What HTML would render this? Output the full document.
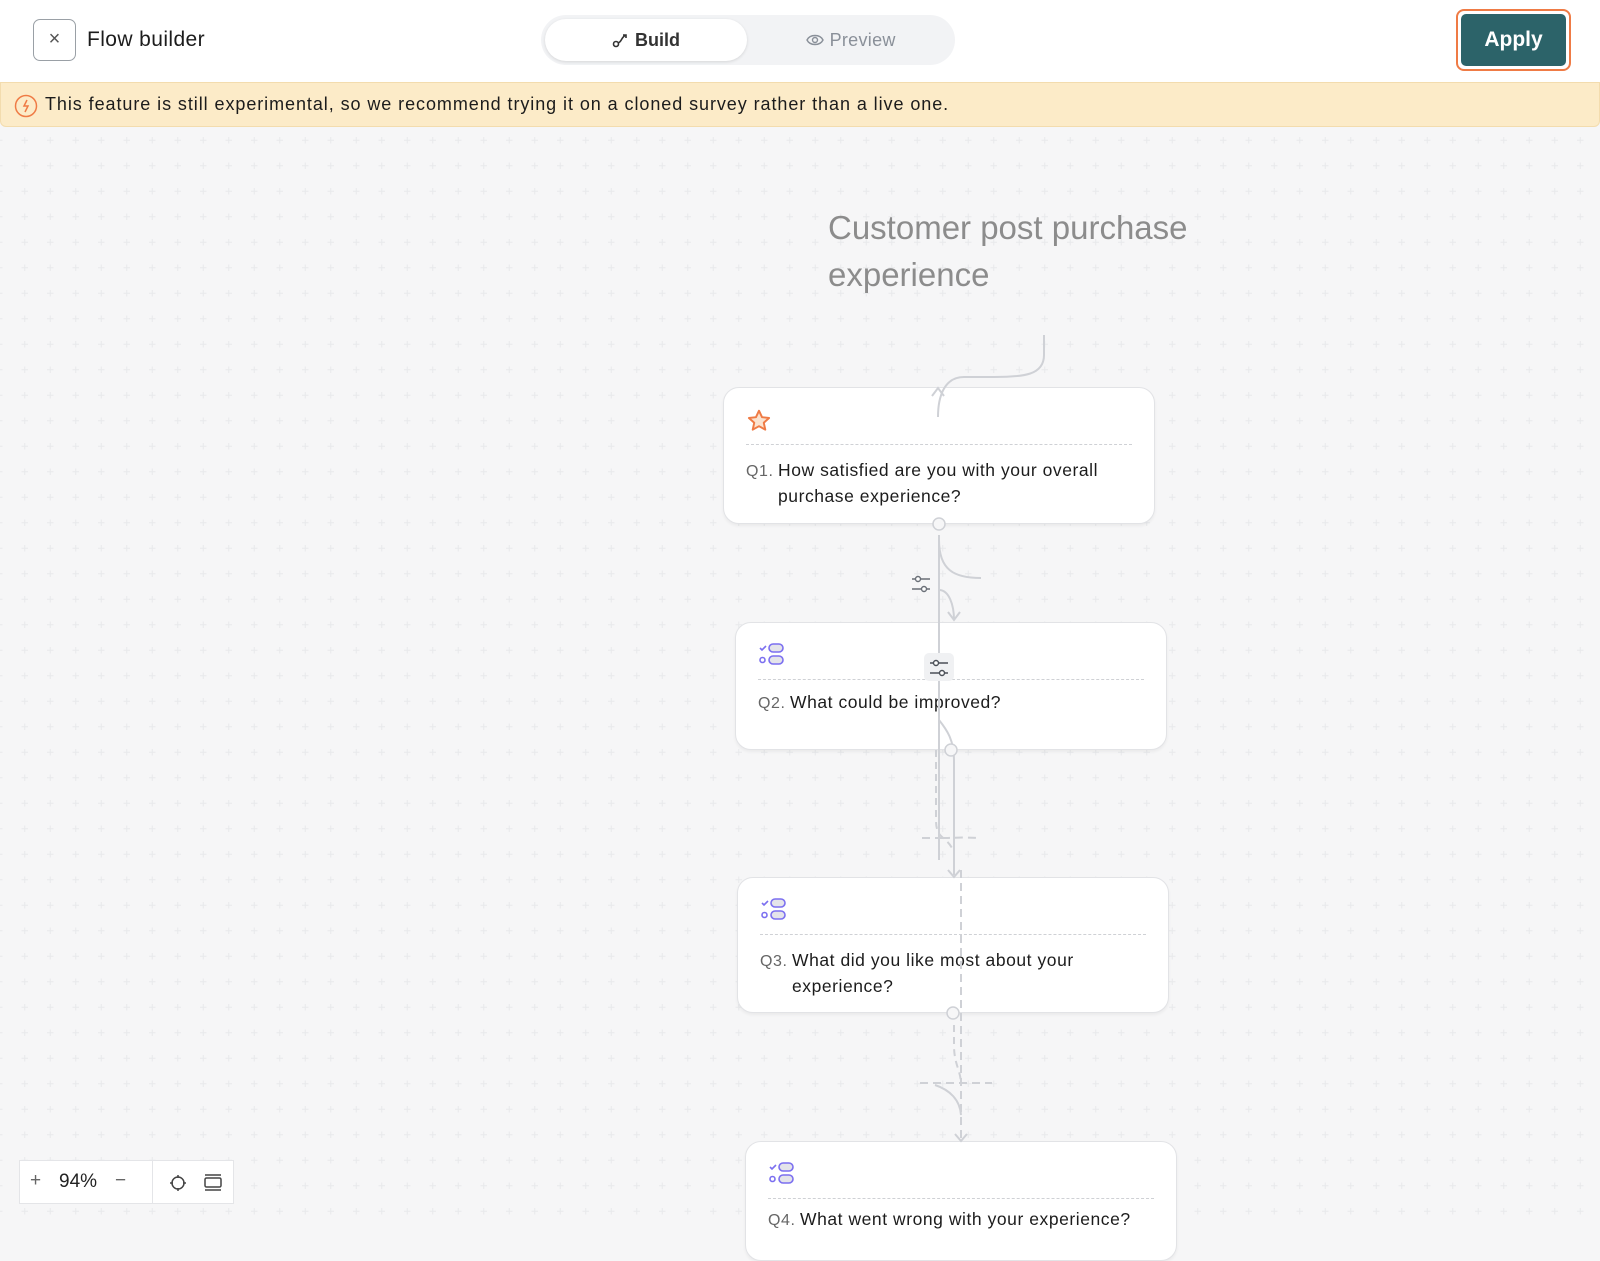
<!DOCTYPE html>
<html><head><meta charset="utf-8"><style>
*{box-sizing:border-box;margin:0;padding:0}
body{width:1600px;height:1224px;overflow:hidden;background:#f6f6f7;font-family:"Liberation Sans",sans-serif;position:relative;color:#1c1c1c}
.hdr{position:absolute;left:0;top:0;width:1600px;height:82px;background:#fff}
.close{position:absolute;left:33px;top:19px;width:43px;height:42px;border:1.5px solid #9aa0a6;border-radius:7px;color:#555;font-size:20px;text-align:center;line-height:38px}
.title{position:absolute;left:87px;top:28px;font-size:21px;color:#1c1c1c;letter-spacing:0.4px}
.tog{position:absolute;left:541px;top:15px;width:414px;height:50px;background:#f2f3f5;border-radius:25px}
.build{position:absolute;left:4px;top:4px;width:202px;height:42px;background:#fff;border-radius:21px;box-shadow:0 1px 3px rgba(0,0,0,.12);text-align:center;line-height:42px;font-size:18px;font-weight:bold;color:#333}
.prev{position:absolute;left:210px;top:4px;width:200px;height:42px;text-align:center;line-height:42px;font-size:18px;color:#8a9099;letter-spacing:0.3px}
.apply{position:absolute;left:1456px;top:9px;width:115px;height:62px;border:2px solid #ef7b45;border-radius:8px;padding:3px}
.apply div{width:100%;height:100%;background:#2c6369;border-radius:5px;color:#fff;font-size:21px;font-weight:bold;text-align:center;line-height:52px}
.ban{position:absolute;left:0;top:82px;width:1600px;height:45px;background:#fcebc8;border:1px solid #f3dcae;border-radius:0 0 6px 6px}
.ban span{position:absolute;left:44px;top:11px;font-size:18px;letter-spacing:0.93px;color:#1c1c1c;white-space:nowrap}
.ban svg{position:absolute;left:13px;top:11px}
.ctitle{position:absolute;left:828px;top:204px;font-size:33px;line-height:47px;color:#8c8c8c}
.card{position:absolute;background:#fff;border:1px solid #e2e3e6;border-radius:16px;box-shadow:0 2px 3px rgba(0,0,0,.05)}
.card .sep{position:absolute;left:22px;right:22px;top:56px;border-top:1px dashed #cfd1d5}
.card .q{position:absolute;left:22px;top:70px;font-size:17.5px;line-height:25.5px;color:#1c1c1c;padding-left:32px;letter-spacing:0.55px;white-space:nowrap}
.card .q b{position:absolute;left:0;top:1px;font-weight:normal;color:#666;font-size:16px}
.card svg{position:absolute;left:22px;top:20px}
.zc{position:absolute;left:19px;top:1160px;width:215px;height:44px;background:#fff;border:1px solid #e4e5e8;font-size:19px;color:#222}
</style></head><body>
<svg width="1600" height="1224" style="position:absolute;left:0;top:0">
<defs><pattern id="g" x="12" y="0" width="25.5" height="25.5" patternUnits="userSpaceOnUse"><path d="M12.75 9.5v6.5M9.5 12.75h6.5" stroke="#e8e9ec" stroke-width="1"/></pattern></defs>
<rect x="0" y="127" width="1600" height="1097" fill="url(#g)"/>
</svg>
<div class="hdr">
<div class="close">×</div>
<div class="title">Flow builder</div>
<div class="tog"><div class="build"><svg width="18" height="16" viewBox="0 0 18 16" style="vertical-align:-2px"><circle cx="4" cy="12" r="2.5" fill="none" stroke="#333" stroke-width="1.6"/><path d="M6 11c4-1 3-6 8-8M11 3h3v3" fill="none" stroke="#333" stroke-width="1.6"/></svg> Build</div>
<div class="prev"><svg width="18" height="14" viewBox="0 0 18 14" style="vertical-align:-1px"><path d="M1 7c3-6 13-6 16 0c-3 6-13 6-16 0z" fill="none" stroke="#8a9099" stroke-width="1.4"/><circle cx="9" cy="7" r="2.5" fill="none" stroke="#8a9099" stroke-width="1.4"/></svg> Preview</div></div>
<div class="apply"><div>Apply</div></div>
</div>
<div class="ban"><svg width="24" height="24" viewBox="0 0 24 24" fill="none" stroke="#ef7b45" stroke-width="1.5"><circle cx="12" cy="12" r="10.5"/><path d="M13 6l-3 6h4l-3 6"/></svg><span>This feature is still experimental, so we recommend trying it on a cloned survey rather than a live one.</span></div>
<div class="ctitle">Customer post purchase<br>experience</div>

<div class="card" style="left:723px;top:387px;width:432px;height:137px">
<svg width="26" height="26" viewBox="0 0 24 24"><path d="M12 2.5l2.8 6 6.5.7-4.9 4.4 1.4 6.4L12 16.8 6.2 20l1.4-6.4L2.7 9.2l6.5-.7z" fill="#fbe3cf" stroke="#ef7b45" stroke-width="1.8" stroke-linejoin="round"/></svg>
<div class="sep"></div>
<div class="q"><b>Q1.</b>How satisfied are you with your overall<br>purchase experience?</div>
</div>
<div class="card" style="left:735px;top:622px;width:432px;height:128px">
<svg width="28" height="24" viewBox="0 0 28 24"><path d="M2 5l2 2 4-4" stroke="#7b6ff0" stroke-width="1.6" fill="none"/><circle cx="4.5" cy="17" r="2.5" stroke="#7b6ff0" stroke-width="1.6" fill="none"/><rect x="11" y="1" width="14" height="8" rx="4" fill="#e4e4ea" stroke="#7b6ff0" stroke-width="1.6"/><rect x="11" y="13" width="14" height="8" rx="4" fill="#e4e4ea" stroke="#7b6ff0" stroke-width="1.6"/></svg>
<div class="sep"></div>
<div class="q" style="top:67px"><b>Q2.</b>What could be improved?</div>
</div>
<div class="card" style="left:737px;top:877px;width:432px;height:136px">
<svg width="28" height="24" viewBox="0 0 28 24"><path d="M2 5l2 2 4-4" stroke="#7b6ff0" stroke-width="1.6" fill="none"/><circle cx="4.5" cy="17" r="2.5" stroke="#7b6ff0" stroke-width="1.6" fill="none"/><rect x="11" y="1" width="14" height="8" rx="4" fill="#e4e4ea" stroke="#7b6ff0" stroke-width="1.6"/><rect x="11" y="13" width="14" height="8" rx="4" fill="#e4e4ea" stroke="#7b6ff0" stroke-width="1.6"/></svg>
<div class="sep"></div>
<div class="q"><b>Q3.</b>What did you like most about your<br>experience?</div>
</div>
<div class="card" style="left:745px;top:1141px;width:432px;height:120px">
<svg width="28" height="24" viewBox="0 0 28 24"><path d="M2 5l2 2 4-4" stroke="#7b6ff0" stroke-width="1.6" fill="none"/><circle cx="4.5" cy="17" r="2.5" stroke="#7b6ff0" stroke-width="1.6" fill="none"/><rect x="11" y="1" width="14" height="8" rx="4" fill="#e4e4ea" stroke="#7b6ff0" stroke-width="1.6"/><rect x="11" y="13" width="14" height="8" rx="4" fill="#e4e4ea" stroke="#7b6ff0" stroke-width="1.6"/></svg>
<div class="sep"></div>
<div class="q" style="top:65px"><b>Q4.</b>What went wrong with your experience?</div>
</div>

<svg width="1600" height="1224" style="position:absolute;left:0;top:0" fill="none" stroke="#cfd1d6" stroke-width="2">
<path d="M1044 335v20c0 20-20 22-50 22h-30c-20 0-26 20-26 40"/>
<path d="M932 396l6-8 6 8"/>
<path d="M939 535v325"/>
<path d="M939 540c0 30 15 38 42 38"/>
<path d="M939 590c10 0 15 15 15 30M948 612l6 8 6-8"/>
<path d="M939 720c8 10 15 20 15 40v100"/>
<path d="M936 750v70c0 20 10 15 17 30" stroke-dasharray="7 5"/>
<path d="M922 838h20M942 838c10 0 20-1 36 0" stroke-dasharray="8 5"/>
<path d="M954 860v15M948 870l6 7 6-7"/>
<path d="M961 870v270" stroke-dasharray="8 5"/>
<path d="M954 1025v20c0 20 7 25 7 40" stroke-dasharray="7 5"/>
<path d="M920 1083h72" stroke-dasharray="8 5"/>
<path d="M935 1085c15 5 25 15 26 30M955 1134l6 7 6-7"/>
<circle cx="939" cy="524" r="6" fill="#f6f6f7" stroke-width="1.5"/>
<circle cx="951" cy="750" r="6" fill="#f6f6f7" stroke-width="1.5"/>
<circle cx="953" cy="1013" r="6" fill="#f6f6f7" stroke-width="1.5"/>
<g stroke="#6a6f77" stroke-width="1.4"><path d="M912 579h18M912 589h18"/><circle cx="918" cy="579" r="2.5" fill="#fff"/><circle cx="924" cy="589" r="2.5" fill="#fff"/></g>
<rect x="924" y="653" width="30" height="28" rx="5" fill="#f0f1f3" stroke="none"/>
<g stroke="#4a4f57" stroke-width="1.4"><path d="M930 663h18M930 673h18"/><circle cx="936" cy="663" r="2.5" fill="#fff"/><circle cx="942" cy="673" r="2.5" fill="#fff"/></g>
</svg>

<div class="zc">
<span style="position:absolute;left:10px;top:9px;color:#666">+</span>
<span style="position:absolute;left:39px;top:10px">94%</span>
<span style="position:absolute;left:95px;top:9px;color:#666">−</span>
<div style="position:absolute;left:132px;top:0;width:1px;height:42px;background:#e4e5e8"></div>
<svg style="position:absolute;left:148px;top:12px" width="20" height="20" viewBox="0 0 20 20"><circle cx="10" cy="10" r="6" fill="none" stroke="#444" stroke-width="1.5"/><path d="M10 2v3M10 15v3M2 10h3M15 10h3" stroke="#444" stroke-width="1.5"/></svg>
<svg style="position:absolute;left:183px;top:12px" width="20" height="20" viewBox="0 0 20 20"><rect x="2" y="5" width="16" height="9" rx="1.5" fill="none" stroke="#444" stroke-width="1.5"/><path d="M2 2h16M2 17h16" stroke="#444" stroke-width="1.5"/></svg>
</div>
</body></html>
